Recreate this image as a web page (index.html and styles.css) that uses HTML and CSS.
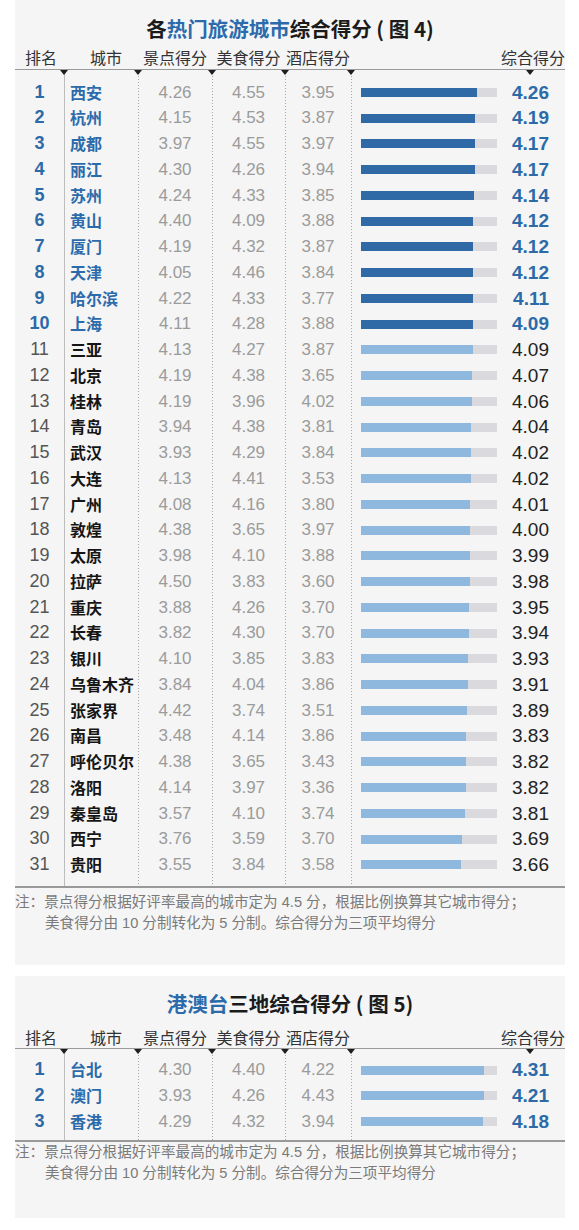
FILE: index.html
```html
<!DOCTYPE html>
<html lang="zh">
<head>
<meta charset="utf-8">
<title>热门旅游城市综合得分</title>
<link rel="stylesheet" href="styles.css">
</head>
<body>
<div class="page">
  <section class="panel panel-main">
    <h1 class="title">各<span class="hl">热门旅游城市</span>综合得分 ( 图 4)</h1>
    <div class="head">
      <span class="h-rank">排名</span><span class="h-city">城市</span><span>景点得分</span><span>美食得分</span><span>酒店得分</span><span class="h-total">综合得分</span>
    </div>
    <div class="body">
      <div class="marks">
        <i></i>
        <i><svg width="8" height="5" viewBox="0 0 8 5"><polygon points="0,0 8,0 4,5"/></svg></i>
        <i><svg width="8" height="5" viewBox="0 0 8 5"><polygon points="0,0 8,0 4,5"/></svg></i>
        <i><svg width="8" height="5" viewBox="0 0 8 5"><polygon points="0,0 8,0 4,5"/></svg></i>
        <i><svg width="8" height="5" viewBox="0 0 8 5"><polygon points="0,0 8,0 4,5"/></svg></i>
        <i class="last"><svg width="8" height="5" viewBox="0 0 8 5"><polygon points="0,0 8,0 4,5"/></svg><svg class="end" width="8" height="5" viewBox="0 0 8 5"><polygon points="0,0 8,0 4,5"/></svg></i>
      </div>
      <div class="row top"><span class="rank">1</span><span class="city">西安</span><span class="s">4.26</span><span class="s">4.55</span><span class="s">3.95</span><span class="bar"><span class="track"><span class="fill" style="width:85.3%"></span></span><span class="total">4.26</span></span></div>
      <div class="row top"><span class="rank">2</span><span class="city">杭州</span><span class="s">4.15</span><span class="s">4.53</span><span class="s">3.87</span><span class="bar"><span class="track"><span class="fill" style="width:84.0%"></span></span><span class="total">4.19</span></span></div>
      <div class="row top"><span class="rank">3</span><span class="city">成都</span><span class="s">3.97</span><span class="s">4.55</span><span class="s">3.97</span><span class="bar"><span class="track"><span class="fill" style="width:83.6%"></span></span><span class="total">4.17</span></span></div>
      <div class="row top"><span class="rank">4</span><span class="city">丽江</span><span class="s">4.30</span><span class="s">4.26</span><span class="s">3.94</span><span class="bar"><span class="track"><span class="fill" style="width:83.6%"></span></span><span class="total">4.17</span></span></div>
      <div class="row top"><span class="rank">5</span><span class="city">苏州</span><span class="s">4.24</span><span class="s">4.33</span><span class="s">3.85</span><span class="bar"><span class="track"><span class="fill" style="width:83.0%"></span></span><span class="total">4.14</span></span></div>
      <div class="row top"><span class="rank">6</span><span class="city">黄山</span><span class="s">4.40</span><span class="s">4.09</span><span class="s">3.88</span><span class="bar"><span class="track"><span class="fill" style="width:82.6%"></span></span><span class="total">4.12</span></span></div>
      <div class="row top"><span class="rank">7</span><span class="city">厦门</span><span class="s">4.19</span><span class="s">4.32</span><span class="s">3.87</span><span class="bar"><span class="track"><span class="fill" style="width:82.6%"></span></span><span class="total">4.12</span></span></div>
      <div class="row top"><span class="rank">8</span><span class="city">天津</span><span class="s">4.05</span><span class="s">4.46</span><span class="s">3.84</span><span class="bar"><span class="track"><span class="fill" style="width:82.6%"></span></span><span class="total">4.12</span></span></div>
      <div class="row top"><span class="rank">9</span><span class="city">哈尔滨</span><span class="s">4.22</span><span class="s">4.33</span><span class="s">3.77</span><span class="bar"><span class="track"><span class="fill" style="width:82.4%"></span></span><span class="total">4.11</span></span></div>
      <div class="row top"><span class="rank">10</span><span class="city">上海</span><span class="s">4.11</span><span class="s">4.28</span><span class="s">3.88</span><span class="bar"><span class="track"><span class="fill" style="width:82.0%"></span></span><span class="total">4.09</span></span></div>
      <div class="row"><span class="rank">11</span><span class="city">三亚</span><span class="s">4.13</span><span class="s">4.27</span><span class="s">3.87</span><span class="bar"><span class="track"><span class="fill" style="width:82.0%"></span></span><span class="total">4.09</span></span></div>
      <div class="row"><span class="rank">12</span><span class="city">北京</span><span class="s">4.19</span><span class="s">4.38</span><span class="s">3.65</span><span class="bar"><span class="track"><span class="fill" style="width:81.7%"></span></span><span class="total">4.07</span></span></div>
      <div class="row"><span class="rank">13</span><span class="city">桂林</span><span class="s">4.19</span><span class="s">3.96</span><span class="s">4.02</span><span class="bar"><span class="track"><span class="fill" style="width:81.5%"></span></span><span class="total">4.06</span></span></div>
      <div class="row"><span class="rank">14</span><span class="city">青岛</span><span class="s">3.94</span><span class="s">4.38</span><span class="s">3.81</span><span class="bar"><span class="track"><span class="fill" style="width:81.1%"></span></span><span class="total">4.04</span></span></div>
      <div class="row"><span class="rank">15</span><span class="city">武汉</span><span class="s">3.93</span><span class="s">4.29</span><span class="s">3.84</span><span class="bar"><span class="track"><span class="fill" style="width:80.7%"></span></span><span class="total">4.02</span></span></div>
      <div class="row"><span class="rank">16</span><span class="city">大连</span><span class="s">4.13</span><span class="s">4.41</span><span class="s">3.53</span><span class="bar"><span class="track"><span class="fill" style="width:80.7%"></span></span><span class="total">4.02</span></span></div>
      <div class="row"><span class="rank">17</span><span class="city">广州</span><span class="s">4.08</span><span class="s">4.16</span><span class="s">3.80</span><span class="bar"><span class="track"><span class="fill" style="width:80.5%"></span></span><span class="total">4.01</span></span></div>
      <div class="row"><span class="rank">18</span><span class="city">敦煌</span><span class="s">4.38</span><span class="s">3.65</span><span class="s">3.97</span><span class="bar"><span class="track"><span class="fill" style="width:80.3%"></span></span><span class="total">4.00</span></span></div>
      <div class="row"><span class="rank">19</span><span class="city">太原</span><span class="s">3.98</span><span class="s">4.10</span><span class="s">3.88</span><span class="bar"><span class="track"><span class="fill" style="width:80.1%"></span></span><span class="total">3.99</span></span></div>
      <div class="row"><span class="rank">20</span><span class="city">拉萨</span><span class="s">4.50</span><span class="s">3.83</span><span class="s">3.60</span><span class="bar"><span class="track"><span class="fill" style="width:79.9%"></span></span><span class="total">3.98</span></span></div>
      <div class="row"><span class="rank">21</span><span class="city">重庆</span><span class="s">3.88</span><span class="s">4.26</span><span class="s">3.70</span><span class="bar"><span class="track"><span class="fill" style="width:79.3%"></span></span><span class="total">3.95</span></span></div>
      <div class="row"><span class="rank">22</span><span class="city">长春</span><span class="s">3.82</span><span class="s">4.30</span><span class="s">3.70</span><span class="bar"><span class="track"><span class="fill" style="width:79.2%"></span></span><span class="total">3.94</span></span></div>
      <div class="row"><span class="rank">23</span><span class="city">银川</span><span class="s">4.10</span><span class="s">3.85</span><span class="s">3.83</span><span class="bar"><span class="track"><span class="fill" style="width:79.0%"></span></span><span class="total">3.93</span></span></div>
      <div class="row"><span class="rank">24</span><span class="city">乌鲁木齐</span><span class="s">3.84</span><span class="s">4.04</span><span class="s">3.86</span><span class="bar"><span class="track"><span class="fill" style="width:78.6%"></span></span><span class="total">3.91</span></span></div>
      <div class="row"><span class="rank">25</span><span class="city">张家界</span><span class="s">4.42</span><span class="s">3.74</span><span class="s">3.51</span><span class="bar"><span class="track"><span class="fill" style="width:78.2%"></span></span><span class="total">3.89</span></span></div>
      <div class="row"><span class="rank">26</span><span class="city">南昌</span><span class="s">3.48</span><span class="s">4.14</span><span class="s">3.86</span><span class="bar"><span class="track"><span class="fill" style="width:77.1%"></span></span><span class="total">3.83</span></span></div>
      <div class="row"><span class="rank">27</span><span class="city">呼伦贝尔</span><span class="s">4.38</span><span class="s">3.65</span><span class="s">3.43</span><span class="bar"><span class="track"><span class="fill" style="width:76.9%"></span></span><span class="total">3.82</span></span></div>
      <div class="row"><span class="rank">28</span><span class="city">洛阳</span><span class="s">4.14</span><span class="s">3.97</span><span class="s">3.36</span><span class="bar"><span class="track"><span class="fill" style="width:76.9%"></span></span><span class="total">3.82</span></span></div>
      <div class="row"><span class="rank">29</span><span class="city">秦皇岛</span><span class="s">3.57</span><span class="s">4.10</span><span class="s">3.74</span><span class="bar"><span class="track"><span class="fill" style="width:76.7%"></span></span><span class="total">3.81</span></span></div>
      <div class="row"><span class="rank">30</span><span class="city">西宁</span><span class="s">3.76</span><span class="s">3.59</span><span class="s">3.70</span><span class="bar"><span class="track"><span class="fill" style="width:74.4%"></span></span><span class="total">3.69</span></span></div>
      <div class="row"><span class="rank">31</span><span class="city">贵阳</span><span class="s">3.55</span><span class="s">3.84</span><span class="s">3.58</span><span class="bar"><span class="track"><span class="fill" style="width:73.8%"></span></span><span class="total">3.66</span></span></div>
    </div>
    <p class="note">注：景点得分根据好评率最高的城市定为 4.5 分，根据比例换算其它城市得分；<br>美食得分由 10 分制转化为 5 分制。综合得分为三项平均得分</p>
  </section>

  <section class="panel panel-sub">
    <h1 class="title"><span class="hl">港澳台</span>三地综合得分 ( 图 5)</h1>
    <div class="head">
      <span class="h-rank">排名</span><span class="h-city">城市</span><span>景点得分</span><span>美食得分</span><span>酒店得分</span><span class="h-total">综合得分</span>
    </div>
    <div class="body">
      <div class="marks">
        <i></i>
        <i><svg width="8" height="5" viewBox="0 0 8 5"><polygon points="0,0 8,0 4,5"/></svg></i>
        <i><svg width="8" height="5" viewBox="0 0 8 5"><polygon points="0,0 8,0 4,5"/></svg></i>
        <i><svg width="8" height="5" viewBox="0 0 8 5"><polygon points="0,0 8,0 4,5"/></svg></i>
        <i><svg width="8" height="5" viewBox="0 0 8 5"><polygon points="0,0 8,0 4,5"/></svg></i>
        <i class="last"><svg width="8" height="5" viewBox="0 0 8 5"><polygon points="0,0 8,0 4,5"/></svg><svg class="end" width="8" height="5" viewBox="0 0 8 5"><polygon points="0,0 8,0 4,5"/></svg></i>
      </div>
      <div class="row top light"><span class="rank">1</span><span class="city">台北</span><span class="s">4.30</span><span class="s">4.40</span><span class="s">4.22</span><span class="bar"><span class="track"><span class="fill" style="width:90.4%"></span></span><span class="total">4.31</span></span></div>
      <div class="row top light"><span class="rank">2</span><span class="city">澳门</span><span class="s">3.93</span><span class="s">4.26</span><span class="s">4.43</span><span class="bar"><span class="track"><span class="fill" style="width:90.1%"></span></span><span class="total">4.21</span></span></div>
      <div class="row top light"><span class="rank">3</span><span class="city">香港</span><span class="s">4.29</span><span class="s">4.32</span><span class="s">3.94</span><span class="bar"><span class="track"><span class="fill" style="width:89.9%"></span></span><span class="total">4.18</span></span></div>
    </div>
    <p class="note">注：景点得分根据好评率最高的城市定为 4.5 分，根据比例换算其它城市得分；<br>美食得分由 10 分制转化为 5 分制。综合得分为三项平均得分</p>
  </section>
</div>
</body>
</html>
```

FILE: styles.css
```css
* { box-sizing: border-box; }

body {
  margin: 0;
  background: #ffffff;
  font-family: "Liberation Sans", "Noto Sans CJK SC", sans-serif;
  color: #222;
}

.page {
  width: 550px;
  margin-left: 15px;
}

.panel {
  background: #f5f5f5;
}

.panel-sub {
  margin-top: 11px;
}

.title {
  margin: 0;
  font-family: "Noto Sans CJK SC", sans-serif;
  font-size: 20.5px;
  font-weight: 700;
  line-height: 28px;
  text-align: center;
  color: #1b1b1b;
}

.title .hl {
  color: #2c6bab;
}

.panel-main { padding-top: 14px; padding-bottom: 31px; }
.panel-sub { padding-top: 13px; padding-bottom: 34px; }

.head {
  display: grid;
  grid-template-columns: 49px 74px 74px 73px 66px 1fr;
  font-family: "Noto Sans CJK SC", sans-serif;
  font-size: 16px;
  color: #333;
  text-align: center;
  border-bottom: 1px solid #9a9a9a;
}

.panel-main .head { margin-top: 4px; height: 24px; line-height: 23px; }
.panel-sub .head { margin-top: 9px; height: 23px; line-height: 22px; }

.head .h-rank { padding-left: 3px; }
.head .h-city { padding-left: 10px; }
.head .h-total { text-align: right; }

.body {
  background-image:
    linear-gradient(#bdbdbd, #bdbdbd),
    repeating-linear-gradient(to bottom, #a8a8a8 0 1px, transparent 1px 3px),
    repeating-linear-gradient(to bottom, #a8a8a8 0 1px, transparent 1px 3px),
    repeating-linear-gradient(to bottom, #a8a8a8 0 1px, transparent 1px 3px),
    repeating-linear-gradient(to bottom, #a8a8a8 0 1px, transparent 1px 3px);
  background-size: 1px 100%;
  background-repeat: no-repeat;
  background-position: 49px 0, 123px 0, 197px 0, 270px 0, 336px 0;
  border-bottom: 2px solid #999;
}

.panel-main .body { padding-bottom: 8px; }
.panel-sub .body { padding-bottom: 5px; }

.marks {
  display: grid;
  grid-template-columns: 49px 74px 74px 73px 66px 1fr;
  height: 5px;
}

.panel-main .marks { margin-bottom: 4.6px; }
.panel-sub .marks { margin-bottom: 3px; }

.marks i {
  display: flex;
  justify-content: space-between;
  height: 5px;
}

.marks svg {
  display: block;
  margin-left: -4px;
  fill: #1e1e1e;
}

.marks svg.end {
  margin-left: 0;
  margin-right: 31px;
}

.row {
  display: grid;
  grid-template-columns: 49px 74px 74px 73px 66px 1fr;
  height: 25.75px;
  line-height: 25.75px;
  align-items: center;
}

.rank {
  text-align: center;
  font-size: 18px;
  color: #555;
}

.city {
  padding-left: 6px;
  font-family: "Noto Sans CJK SC", sans-serif;
  font-size: 16px;
  font-weight: 700;
  color: #151515;
  white-space: nowrap;
}

.s {
  text-align: center;
  font-size: 17px;
  color: #9b9b9b;
}

.bar {
  display: flex;
  align-items: center;
  padding-left: 10px;
  padding-right: 16px;
  height: 100%;
}

.track {
  display: block;
  width: 136px;
  height: 9px;
  background: #d9d9de;
}

.fill {
  display: block;
  height: 100%;
  background: #8fb8df;
}

.total {
  margin-left: auto;
  font-size: 19px;
  color: #222;
}

.row.top .rank,
.row.top .total {
  color: #2c6aa8;
  font-weight: 700;
}

.row.top .city {
  color: #2c6bab;
}

.row.top .fill {
  background: #2f6aa6;
}

.row.top.light .fill {
  background: #8fb8df;
}

.note {
  margin: 0;
  padding-left: 30px;
  text-indent: -30px;
  font-size: 14.6px;
  line-height: 21px;
  color: #7a7a7a;
}

.panel-main .note { padding-top: 4.5px; }
.panel-sub .note { padding-top: 0.5px; }
```
